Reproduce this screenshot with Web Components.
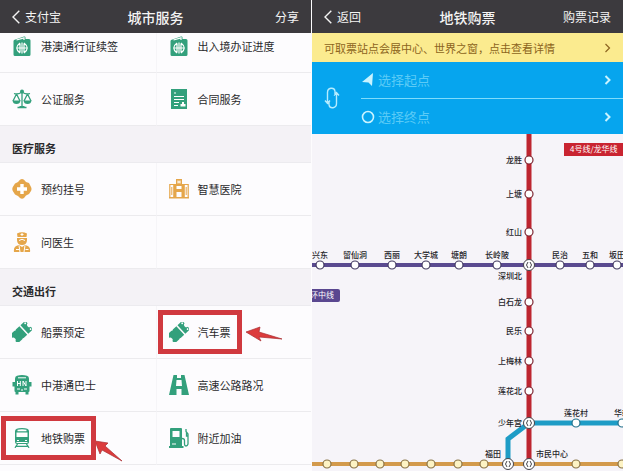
<!DOCTYPE html>
<html lang="zh-CN">
<head>
<meta charset="utf-8">
<meta name="viewport" content="width=device-width, initial-scale=1">
<title>城市服务</title>
<style>
  html, body { height: 100%; }
  body {
    margin: 0;
    overflow: hidden;
    background: #fdfcfe;
    color: #2a2a2c;
    font: 11px/16px "Noto Sans CJK SC", sans-serif;
  }
</style>
</head>
<body>
<city-app></city-app>

<template id="bar-template">
  <style>
    :host {
      display: grid;
      grid-template-columns: 1fr auto 1fr;
      align-items: center;
      flex: none;
      height: 33px;
      padding: 0 12px;
      box-sizing: border-box;
      background: #3c3a3e;
      color: #f4f4f4;
      font-size: 12px;
    }
    a { color: inherit; text-decoration: none; display: flex; align-items: center; gap: 5px; }
    .action { justify-self: end; }
    h1 { margin: 0; font-size: 14px; font-weight: 500; line-height: 20px; }
    svg { width: 8px; height: 14px; fill: none; stroke: currentColor; stroke-width: 1.4; }
  </style>
  <a href="#back"><svg viewBox="0 0 8 14"><path d="M7.3.8 1 7l6.3 6.2"/></svg><slot name="back"></slot></a>
  <h1><slot></slot></h1>
  <a class="action" href="#action"><slot name="action"></slot></a>
</template>

<template id="section-template">
  <style>
    :host { display: block; }
    h2 {
      margin: 0;
      height: 37px;
      padding: 8px 12px 0;
      box-sizing: border-box;
      display: flex;
      align-items: center;
      background: #f4f2f6;
      border-bottom: 1px solid #ecebef;
      font-size: 11px;
      font-weight: 700;
    }
    :host(:not([heading])) h2 { display: none; }
    .grid { display: grid; grid-template-columns: 1fr 1fr; grid-auto-rows: 53px; }
  </style>
  <h2></h2>
  <div class="grid"><slot></slot></div>
</template>

<template id="item-template">
  <style>
    :host {
      display: flex;
      align-items: center;
      padding-left: 12px;
      border-bottom: 1px solid #ecebee;
      box-sizing: border-box;
    }
    :host(:nth-child(even)) { border-left: 1px solid #f6f5f8; }
    a {
      position: relative;
      display: flex;
      align-items: center;
      gap: 9px;
      color: inherit;
      text-decoration: none;
      white-space: nowrap;
    }
    .icon { width: 20px; height: 20px; color: #33a07c; }
    :host([tone="orange"]) .icon { color: #e5a64a; }
    :host([marked]) a::after {
      content: "";
      position: absolute;
      inset: -12px -11px;
      border: 5px solid #d0393f;
    }
    .arrow { display: none; position: absolute; left: 100%; overflow: visible; fill: #dc3b3c; stroke: #a92d31; stroke-width: .7; }
    :host([marked="level"]) .level, :host([marked="rising"]) .rising { display: block; }
    .level { top: 4px; margin-left: 14px; width: 38px; height: 16px; }
    .rising { top: 12px; margin-left: 9px; width: 30px; height: 22px; }
  </style>
  <a href="#service">
    <svg class="icon" viewBox="0 0 20 20"></svg>
    <slot></slot>
    <svg class="arrow level" viewBox="0 0 38 16"><path d="M1 6 15 1l-1 5 23 7-23-2 2 4Z"/></svg>
    <svg class="arrow rising" viewBox="0 0 30 22"><path d="m1 1 13 2-3 3 17 15L8 10l-2 4Z"/></svg>
  </a>
</template>

<template id="trip-template">
  <style>
    :host { display: block; flex: none; }
    .notice {
      display: flex;
      align-items: center;
      justify-content: space-between;
      height: 29px;
      padding: 0 12px;
      background: #fbeb8f;
      color: #8c6420;
      text-decoration: none;
      white-space: nowrap;
    }
    .picker {
      display: grid;
      grid-template-columns: 49px 1fr;
      background: #06a5ee;
      height: 72px;
    }
    button { margin: 0; padding: 0; border: 0; background: none; font: inherit; color: inherit; }
    .swap { display: flex; align-items: center; padding-left: 12px; color: #b5ecff; }
    .swap svg { width: 16px; height: 24px; }
    .fields { display: grid; grid-template-rows: 1fr 1fr; }
    .field {
      display: flex;
      align-items: center;
      gap: 3px;
      padding-right: 12px;
      color: #5ccbf6;
      font-size: 13px;
    }
    .field + .field { border-top: 1px solid #7fdcfb; }
    .field .go { margin-left: auto; stroke-width: 2; }
    .field svg { color: #c9f3ff; }
    .mark { width: 14px; height: 14px; }
    .go { width: 7px; height: 10px; fill: none; stroke: currentColor; stroke-width: 1.2; }
  </style>
  <a class="notice" href="#stations">可取票站点会展中心、世界之窗，点击查看详情
    <svg class="go" viewBox="0 0 7 10"><path d="m1.5 1 4 4-4 4"/></svg></a>
  <div class="picker">
    <button class="swap" aria-label="交换起点和终点">
      <svg viewBox="0 0 16 24" fill="none" stroke="currentColor" stroke-width="1.4"><path d="M3.500 17V6.500C3.500 1.500 10 .8 11 5M12.500 7v10.500c0 5-6.500 5.700-7.500 1.500M11 5v4M5 19v-4M1 14.500 3.500 17.500 6 14.500M10 9.500 12.500 6.500l2.500 3"/></svg>
    </button>
    <div class="fields">
      <button class="field">
        <svg class="mark" viewBox="0 0 14 14"><path fill="currentColor" d="M12 0 11 13 7.500 9.500 1 9Z"/></svg>选择起点
        <svg class="go" viewBox="0 0 7 10"><path d="m1.5 1 4 4-4 4"/></svg>
      </button>
      <button class="field">
        <svg class="mark" viewBox="0 0 14 14"><circle cx="7" cy="7" r="5.500" fill="none" stroke="currentColor" stroke-width="1.6"/></svg>选择终点
        <svg class="go" viewBox="0 0 7 10"><path d="m1.5 1 4 4-4 4"/></svg>
      </button>
    </div>
  </div>
</template>

<template id="map-template">
  <style>
    :host { display: block; flex: 1; min-height: 0; background: #f6f4f9; overflow: hidden; }
    svg { display: block; width: 100%; height: 100%; }
    text { font-size: 8px; font-weight: 500; fill: #252529; }
    .tag { fill: #fff; font-weight: 400; }
  </style>
  <svg viewBox="0 0 311 337" preserveAspectRatio="xMinYMin slice">
    <g fill="none" stroke-width="4">
      <path stroke="#d39a4c" d="M0 330H311"/>
      <path stroke="#1e9cc6" stroke-width="5" d="M311 289H217L196 305V330"/>
      <path stroke="#5a4a90" d="M0 131H311"/>
      <path stroke="#bd2530" stroke-width="5" d="M217 0V330"/>
    </g>
    <path fill="#c92431" d="M252 9h59v13h-59z"/>
    <path fill="#5a4790" d="M0 155h26q2 0 2 2v9q0 2-2 2H0z"/>
    <text class="tag" x="258" y="18">4号线/龙华线</text>
    <text class="tag" x="-2" y="164">环中线</text>
    <g id="stations"></g>
  </svg>
</template>

<template id="app-template">
  <style>
    :host { display: grid; grid-template-columns: 1fr 1fr; gap: 1px; height: 100%; overflow: hidden; }
    .screen { display: flex; flex-direction: column; min-width: 0; min-height: 0; overflow: hidden; }
    /* the list is shown scrolled, its first row partly under the bar */
    .list { flex: 1; min-height: 0; overflow: hidden; }
    .list service-section:first-child { margin-top: -13px; }
  </style>
  <section class="screen">
    <title-bar><span slot="back">支付宝</span>城市服务<span slot="action">分享</span></title-bar>
    <div class="list">
      <service-section>
        <service-item icon="permit">港澳通行证续签</service-item>
        <service-item icon="permit">出入境办证进度</service-item>
        <service-item icon="scales">公证服务</service-item>
        <service-item icon="contract">合同服务</service-item>
      </service-section>
      <service-section heading="医疗服务">
        <service-item icon="cross" tone="orange">预约挂号</service-item>
        <service-item icon="hospital" tone="orange">智慧医院</service-item>
        <service-item icon="doctor" tone="orange">问医生</service-item>
        <service-item></service-item>
      </service-section>
      <service-section heading="交通出行">
        <service-item icon="ticket">船票预定</service-item>
        <service-item icon="ticket" marked="level">汽车票</service-item>
        <service-item icon="bus">中港通巴士</service-item>
        <service-item icon="road">高速公路路况</service-item>
        <service-item icon="train" marked="rising">地铁购票</service-item>
        <service-item icon="fuel">附近加油</service-item>
      </service-section>
    </div>
  </section>
  <section class="screen">
    <title-bar><span slot="back">返回</span>地铁购票<span slot="action">购票记录</span></title-bar>
    <trip-picker></trip-picker>
    <metro-map></metro-map>
  </section>
</template>

<script>
const icons = {
  permit: `<path fill="currentColor" d="M2 4 12 .5q1.500-.3 1.500 1V3H17q1.500 0 1.500 1.500v14q0 1.500-1.500 1.500H3q-1.500 0-1.500-1.500V5Z"/>
    <path fill="none" stroke="#fff" stroke-width="1.2" d="M4.500 4 12 1.800V4M10 6.500v11M4.500 12h11M8 7Q1.500 12 8 17M12 7q6.500 5 0 10M8 7.500v9M12 7.500v9"/>`,
  scales: `<g fill="none" stroke="currentColor" stroke-width="1.3"><path d="M10 2v16M2 4.500q4 1.500 8-1.500 4 3 8 1.500M4.500 5 1 12M4.500 5 8 12M15.500 5 12 12M15.500 5 19 12M5.500 18.500h9"/></g>
    <path fill="currentColor" d="M.5 11.500h8q-.5 3.500-4 3.500t-4-3.500M11.500 11.500h8q-.5 3.500-4 3.500t-4-3.500M7.500 17h5v2h-5z"/><circle cx="10" cy="2.500" r="2" fill="currentColor"/>`,
  contract: `<path fill="currentColor" d="M2 0h16v20H2z"/><path fill="none" stroke="#fff" stroke-width="1.2" d="M5 4h2M5 7.500h10M5 10.500h10M5 13.500h5M5 16.500h4"/>
    <path fill="#fff" d="M11.500 15h1.500v-2h2v2h1.500v2.500h-5z"/>`,
  cross: `<path fill="currentColor" d="M8 .8q2-1.500 4 0l2 2.200 3 1 2 4q1 2 0 4l-2 3-3 1.500-2 2.500q-2 1.500-4 0L6 17l-3-1.500L.8 12q-1-2 0-4L3 4.500 6 3Z"/>
    <path fill="#fff" d="M8.300 5h3.400v3.300H15v3.400h-3.300V15H8.300v-3.300H5V8.300h3.300z"/>`,
  hospital: `<path fill="none" stroke="currentColor" stroke-width="1.2" d="M.8 18.500v-13h4v13M15.200 18.500v-13h4v13"/>
    <path fill="currentColor" d="M7 0h6v5h2v14h-2.500v-6h-5v6H5V5h2zM0 18h20v1.500H0z"/><path fill="#fff" d="M8.500 1.500h1v1h1v-1h1v3h-1v-1h-1v1h-1zM7.500 7h5v3h-5z"/>
    <path stroke="currentColor" d="M2.800 8v8M17.200 8v8"/>`,
  doctor: `<path fill="currentColor" d="M5 1.500q5-2.500 10 0L14.500 5h-9ZM5 6h10v2q0 5-5 5T5 8ZM2 20q-1-6 5-7l3 2 3-2q6 1 5 7Z"/>
    <path fill="none" stroke="#fff" d="M10 1v3M8.500 2.500h3M7 8.500q3-2.500 6 0M7 13.500l1 6.500M13 13.500 12 20M4 17.500h3M13.500 17.500h3"/>`,
  ticket: `<g transform="rotate(-43 10 10)"><path fill="currentColor" d="M-1 4h13v11.500H-1V12q1.500 0 1.500-2T-1 7.500ZM13.500 4H20v3.500q-2 0-2 2.300t2 2.300v3.400h-6.500z"/>
    <path fill="#fff" d="M5 3.500q1.300 1.800 2.600 0ZM5 16q1.300-1.800 2.600 0Z"/><circle cx="18.300" cy="5.800" r=".9" fill="#fff"/><circle cx="18.300" cy="13.700" r=".9" fill="#fff"/></g>`,
  bus: `<path fill="currentColor" d="M5 .8q5-1.600 10 0 2 .7 2 3V7h2.500v4.500h-2V16q0 1-1 1v2.500h-3V17h-7v2.500h-3V17q-1 0-1-1v-4.500h-2V7H3V3.800q0-2.300 2-3"/>
    <path fill="none" stroke="#fff" d="M6 2.800h8M5.500 6v5M8.300 6v5M11 11V6l3 5V6M5.500 8.500h3M5 14h3M12 14h3M9 15h2"/>`,
  road: `<path fill="currentColor" d="M4.500 0H8v3h4V0h3.500L20 20h-7.500v-6h-5v6H0ZM7.500 5 7 11h6l-.5-6Z"/>`,
  train: `<path fill="currentColor" d="M3 3q0-3 7-3t7 3v11q0 2-2 2H5q-2 0-2-2z"/>
    <path fill="#fff" d="M5.500 1.800Q10 .6 14.500 1.800v1.400h-9zM4.500 4.500h11V9h-11z"/>
    <path fill="none" stroke="#fff" d="M5 12.500h2M13 12.500h2M4.500 14.500h11"/>
    <path fill="none" stroke="currentColor" stroke-width="1.3" d="M5.500 16 3 19.800M14.500 16l2.500 3.800M3.500 18.300h13"/>`,
  fuel: `<path fill="currentColor" fill-rule="evenodd" d="M2 0h10q1 0 1 1v17h1.500v2H0v-2h1V1q0-1 1-1m1.500 3v6h7V3Z"/>
    <path fill="none" stroke="currentColor" stroke-width="1.3" d="M13 10.500q2.500 0 2.500 2V16q0 2 1.500 2t2-2V6L17 3.500V1M17.500 4v4H19"/>
    <path stroke="#fff" d="M3 16h4"/>`
};

class BaseElement extends HTMLElement {
  constructor(templateId) {
    super();
    const root = this.attachShadow({ mode: "open" });
    root.appendChild(document.getElementById(templateId).content.cloneNode(true));
  }
}

class TitleBar extends BaseElement {
  constructor() { super("bar-template"); }
}

class ServiceSection extends BaseElement {
  constructor() { super("section-template"); }
  connectedCallback() {
    this.shadowRoot.querySelector("h2").textContent = this.getAttribute("heading") || "";
  }
}

class ServiceItem extends BaseElement {
  constructor() { super("item-template"); }
  connectedCallback() {
    // an item without an icon only fills its cell
    const icon = icons[this.getAttribute("icon")];
    if (icon) this.shadowRoot.querySelector(".icon").innerHTML = icon;
    else this.shadowRoot.querySelector("a").remove();
  }
}

class TripPicker extends BaseElement {
  constructor() { super("trip-template"); }
}

// x, y, name, label side
const lines = {
  "#7d2632": [
    [217, 26, "龙胜", "left"], [217, 60, "上塘", "left"], [217, 98, "红山", "left"],
    [217, 168, "白石龙", "left"], [217, 197, "民乐", "left"],
    [217, 227, "上梅林", "left"], [217, 257, "莲花北", "left"]
  ],
  "#443c62": [
    [8, 131, "兴东", "top"], [43, 131, "留仙洞", "top"], [80, 131, "西丽", "top"],
    [114, 131, "大学城", "top"], [147, 131, "塘朗", "top"], [185, 131, "长岭陂", "top"],
    [248, 131, "民治", "top"], [278, 131, "五和", "top"], [305, 131, "坂田", "top"]
  ],
  "#24718c": [[264, 289, "莲花村", "top"], [310, 289, "华新", "top"]],
  "#8a7448": [[15, 330], [42, 330], [68, 330], [93, 330], [119, 330], [146, 330], [172, 330], [264, 330], [310, 330]]
};
const transfers = [[217, 131], [217, 289], [217, 330], [196, 330]];
const labels = [["深圳北", 210, 145, "end"], ["少年宫", 210, 292, "end"], ["福田", 189, 323, "end"], ["市民中心", 224, 323, "start"]];

class MetroMap extends BaseElement {
  constructor() { super("map-template"); }
  connectedCallback() {
    let out = "";
    for (const [color, stations] of Object.entries(lines)) {
      for (const [x, y, name, side] of stations) {
        const fill = color === "#8a7448" ? "#fdf3c4" : "#fff";
        out += `<circle cx="${x}" cy="${y}" r="4" fill="${fill}" stroke="${color}" stroke-width="1.2"/>`;
        if (side === "left") out += `<text x="${x - 7}" y="${y + 3}" text-anchor="end">${name}</text>`;
        if (side === "top") out += `<text x="${x}" y="${y - 7}" text-anchor="middle">${name}</text>`;
      }
    }
    for (const [x, y] of transfers) {
      out += `<g transform="translate(${x} ${y})" fill="none" stroke="#44434a">
        <circle r="5.5" fill="#fff"/><path d="M-1 3Q-4 0-1-3M1 3Q4 0 1-3"/></g>`;
    }
    for (const [name, x, y, anchor] of labels) {
      out += `<text x="${x}" y="${y}" text-anchor="${anchor}">${name}</text>`;
    }
    this.shadowRoot.getElementById("stations").innerHTML = out;
  }
}

class CityApp extends BaseElement {
  constructor() { super("app-template"); }
}

customElements.define("title-bar", TitleBar);
customElements.define("service-section", ServiceSection);
customElements.define("service-item", ServiceItem);
customElements.define("trip-picker", TripPicker);
customElements.define("metro-map", MetroMap);
customElements.define("city-app", CityApp);
</script>
</body>
</html>
